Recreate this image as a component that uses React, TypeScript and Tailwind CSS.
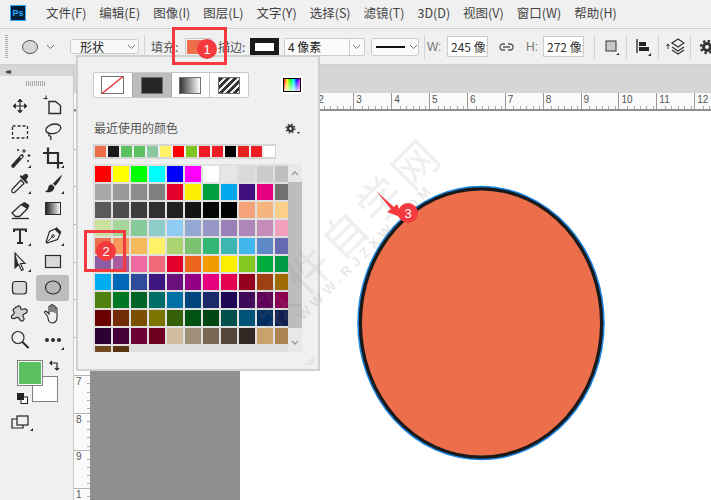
import React from 'react';

const menus = ['文件(F)', '编辑(E)', '图像(I)', '图层(L)', '文字(Y)', '选择(S)', '滤镜(T)', '3D(D)', '视图(V)', '窗口(W)', '帮助(H)'];

const recent = ['#ec6f4a', '#1a1a1a', '#5ac060', '#5ac060', '#8ac99f', '#fff266', '#ff0000', '#7dc61f', '#ee1c25', '#ee1c25', '#000000', '#e5231d', '#ee1c25', '#ffffff'];

const swatches = [
  '#ff0000', '#ffff00', '#00ff00', '#00ffff', '#0000ff', '#ff00ff', '#ffffff', '#e6e6e6', '#d9d9d9', '#cccccc', '#bfbfbf',
  '#a8a8a8', '#999999', '#8c8c8c', '#808080', '#e2002a', '#fcf000', '#009e3d', '#00a7ec', '#3f0f7e', '#e4007f', '#707070',
  '#5a5a5a', '#4c4c4c', '#3d3d3d', '#2f2f2f', '#202020', '#131313', '#050505', '#000000', '#f5a27a', '#f6b47f', '#fbcf8b',
  '#cbe29f', '#a7d69a', '#86c99a', '#8ecdc9', '#8fcbf3', '#93a9d3', '#9896c4', '#9a80b6', '#ae86b8', '#c68cb8', '#f39fbe',
  '#ec7049', '#f59a5a', '#f6b95c', '#fff266', '#acd470', '#7cc271', '#34b675', '#3db6b3', '#40b8ee', '#5f88c6', '#666ab0',
  '#8f5ba3', '#aa5c9f', '#ef6aa0', '#f06a7a', '#e2002a', '#ec661d', '#f39c00', '#fcf000', '#84c71f', '#00ac3b', '#009944',
  '#00aeef', '#0068b7', '#304a9b', '#3e1680', '#690f7e', '#920083', '#e6007e', '#e60050', '#94001e', '#9e4010', '#9f6a00',
  '#4f8010', '#007722', '#006327', '#006d69', '#0071a5', '#00467e', '#1b2a6b', '#200755', '#3f0858', '#610058', '#8c0050',
  '#6b0000', '#722c06', '#7b5000', '#7b7500', '#365f0a', '#005210', '#004713', '#004f48', '#005478', '#002e5f', '#131f50',
  '#2c0034', '#440038', '#6e0038', '#6d0020', '#cfbc9e', '#9f8f78', '#786754', '#544539', '#322824', '#c7a26c', '#a98351',
  '#714a1f', '#5b3412',
];

const ink = '#2b2b2b';

// tool icons, 24 box, corner = small flyout triangle
const Ico = ({ children, corner }: { children?: React.ReactNode; corner?: boolean }) => (
  <svg width="24" height="24" viewBox="0 0 24 24" fill="none" stroke={ink} strokeWidth="1.300">
    {children}
    {corner && <path d="M23 19v3h-3z" fill={ink} stroke="none" />}
  </svg>
);

const tools: React.ReactNode[] = [
  <Ico key="move">
    <path d="M12 6v12M6 12h12" strokeWidth="1.200" />
    <path d="M12 5l2.300 2.500H9.700zM12 19l2.300-2.500H9.700zM5 12l2.500-2.300v4.600zM19 12l-2.500-2.300v4.600z" fill={ink} strokeWidth=".8" />
  </Ico>,
  <Ico key="artboard">
    <path d="M8 7.500h6.500l5 4V19.500H8z" strokeWidth="1.400" />
    <path d="M2.500 4.500h4M5 1.500v4" strokeWidth="1" />
  </Ico>,
  <Ico key="marquee">
    <rect x="4.500" y="6" width="15" height="12" strokeDasharray="3 2" strokeWidth="1.300" />
  </Ico>,
  <Ico key="lasso">
    <path d="M5 11c-1-3.500 4-7 9-7s7 3 5 6-7 4-10 3.500c-2.500-.4-3.500-1-4-2.500z" />
    <path d="M9 13c-1.800 1-1.500 3 0 3s1 3 .5 4" />
  </Ico>,
  <Ico key="wand" corner>
    <path d="M5 20l9-10" strokeWidth="3.600" strokeLinecap="round" />
    <path d="M14 10l-1.500 1.700" stroke="#f0f0f0" strokeWidth="1.500" />
    <path d="M16 3v4M14 5h4M21 8v3M19.500 9.500h3M10 3v2M9 4h2M20 14v2M19 15h2" strokeWidth="1" />
  </Ico>,
  <Ico key="crop" corner>
    <path d="M7 1.500V17h15" strokeWidth="2.200" />
    <path d="M2 7h15v15.500" strokeWidth="2.200" />
  </Ico>,
  <Ico key="dropper" corner>
    <path d="M13 8l-8.500 9c-1 1-1 2-.5 3s2 1 3 0l9-8.500z" strokeWidth="1.200" />
    <path d="M12 5l7 7 1-2-2-2 2-3c1-1.500-1.500-4-3-3l-3 2-2-1z" fill={ink} stroke="none" />
  </Ico>,
  <Ico key="brush" corner>
    <path d="M12 11.500L21 2.500c-.5 3-4 9-7 11.500z" fill={ink} stroke="none" />
    <path d="M11 12.500c-3 0-3.500 2-4 4-.4 1.500-1.500 2.500-3 3 4 2 9 .5 9.500-4.500z" fill={ink} stroke="none" />
  </Ico>,
  <Ico key="eraser">
    <path d="M4 15L13 6.500l6.500 4-8 8H7.500z" />
    <path d="M13 6.500l6.500 4 1.500-1.500c.5-1 .3-1.800-.5-2.500l-3-2c-.8-.5-1.500-.5-2.500.2z" fill={ink} stroke="none" />
    <path d="M4 20.500h17" strokeWidth="1.300" />
  </Ico>,
  <svg key="gradient" width="24" height="24" viewBox="0 0 24 24">
    <defs>
      <linearGradient id="toolGrad">
        <stop offset="0" stopColor="#1f1f1f" />
        <stop offset="1" stopColor="#ffffff" />
      </linearGradient>
    </defs>
    <rect x="4.500" y="4.500" width="15" height="12" fill="url(#toolGrad)" stroke={ink} strokeWidth="1" />
  </svg>,
  <Ico key="type" corner>
    <path d="M6 8V5.500h12V8M12 5.500V18.500M9 19h6" strokeWidth="2" />
  </Ico>,
  <Ico key="pen" corner>
    <path d="M14 5l5 5-2.500 5.500L6 19l-1-1 3.500-10.500z" strokeWidth="1.200" />
    <path d="M14 5l1.500-2 5 5-1.500 2z" fill={ink} stroke="none" />
    <path d="M5.500 18.500l6-6" strokeWidth="1" />
    <circle cx="12" cy="12" r="1.300" strokeWidth="1" />
  </Ico>,
  <Ico key="select" corner>
    <path d="M7 3l10 10.500h-4.500l2.800 6-1.800 1-2.800-6L7 18z" strokeWidth="1.100" />
    <path d="M7 3l3.500 11.500L7 18z" fill={ink} stroke="none" />
  </Ico>,
  <Ico key="rect">
    <rect x="4.500" y="5.500" width="15" height="12" fill="#d9d9d9" strokeWidth="1.200" />
  </Ico>,
  <Ico key="rounded">
    <rect x="4.500" y="5.500" width="14" height="12.500" rx="3" fill="#d9d9d9" strokeWidth="1.200" />
  </Ico>,
  <Ico key="ellipse">
    <ellipse cx="12" cy="11.500" rx="7.500" ry="6.500" fill="#b9b9b9" strokeWidth="1.200" />
  </Ico>,
  <Ico key="custom">
    <path d="M9 5c1.500-2 3.500-1 3.500.8s1.500 1.700 3.500 1.200 4 1 3 3-3.500 1.500-4 3 2 3 .8 5-3.500 1-4.500-1-2.300-2-4.300-.8-4.200-.2-3.500-2 3-2 2.800-3.500-2.300-2.200-.8-3.700 2-.5 2.500-2z" fill="#d0d0d0" strokeWidth="1.200" />
  </Ico>,
  <Ico key="hand">
    <path d="M6.500 14L3.800 11c-1-1.200.6-2.600 1.700-1.500L8 12V5c0-1.400 2-1.400 2 0v5-6.500c0-1.400 2-1.400 2 0V10V4.500c0-1.400 2-1.400 2 0V11V6.500c0-1.400 2-1.400 2 0V15c0 4-2 6-5 6-2.500 0-3.500-1-4.500-7z" strokeWidth="1.100" />
  </Ico>,
  <Ico key="zoom">
    <circle cx="10" cy="9.500" r="6" strokeWidth="1.200" />
    <path d="M14.500 14l6 6" strokeWidth="2" />
  </Ico>,
  <Ico key="more" corner>
    <circle cx="6" cy="12" r="2" fill={ink} stroke="none" />
    <circle cx="12" cy="12" r="2" fill={ink} stroke="none" />
    <circle cx="18" cy="12" r="2" fill={ink} stroke="none" />
  </Ico>,
];

const Chevron = () => (
  <svg width="9" height="6" viewBox="0 0 9 6" fill="none" stroke="#777" strokeWidth="1">
    <path d="M1 1l3.500 3.500L8 1" />
  </svg>
);

const Sep = ({ ml }: { ml: string }) => <div className={`${ml} h-[24px] w-px shrink-0 bg-[#d4d4d4]`} />;

const Badge = ({ n }: { n: string }) => (
  <div className="flex h-[20px] w-[20px] items-center justify-center rounded-full bg-[#f43a3f] text-[13px] leading-none text-white [font-family:'Liberation_Sans',sans-serif]">
    {n}
  </div>
);

const Gear = ({ size }: { size: number }) => (
  <svg width={size} height={size} viewBox="0 0 16 16" fill="none" stroke="#333">
    <circle cx="8" cy="8" r="3.500" strokeWidth="3" />
    <circle cx="8" cy="8" r="6" strokeWidth="2.400" strokeDasharray="2.400 2.300" />
  </svg>
);

function OptionsBar() {
  return (
    <div className="flex h-[36px] items-center border-b border-[#d0d0d0] bg-[#f0f0f0] text-[12px] text-[#444]">
      <div className="ml-[5px] h-[24px] w-[3px] shrink-0 bg-[repeating-linear-gradient(#aaa_0_1px,transparent_1px_2px)]" />
      <svg className="ml-[13px] shrink-0" width="18" height="16" viewBox="0 0 18 16">
        <ellipse cx="9" cy="8" rx="7.500" ry="6.500" fill="#d6d6d6" stroke="#555" strokeWidth="1" />
      </svg>
      <div className="ml-[7px] shrink-0"><Chevron /></div>
      <div className="ml-[15px] flex h-[15px] w-[69px] shrink-0 items-center justify-between rounded-[3px] border border-[#ccc] bg-[#f8f8f8] pl-[9px] pr-[2px] text-[#222]">
        形状 <Chevron />
      </div>
      <Sep ml="ml-[5px]" />
      <span className="ml-[6px] w-[30px] shrink-0 text-[#555]">填充:</span>
      <div className="ml-[4px] flex h-[18px] w-[27px] shrink-0 items-center justify-center border border-[#c8c8c8] bg-[#f4f4f4]">
        <div className="h-[14px] w-[23px] bg-[#ec6e4a]" />
      </div>
      <span className="ml-[6px] w-[28px] shrink-0 whitespace-nowrap text-[#555]">描边:</span>
      <div className="ml-[4px] flex h-[18px] w-[29px] shrink-0 items-center justify-center bg-[#1a1a1a]">
        <div className="h-[8px] w-[19px] bg-white" />
      </div>
      <div className="ml-[5px] flex h-[18px] w-[81px] shrink-0 items-center justify-between rounded-[2px] border border-[#ccc] bg-[#fafafa] pl-[3px] pr-[3px] text-[#222]">
        4 像素
        <div className="flex h-full items-center border-l border-[#ccc] pl-[2px]"><Chevron /></div>
      </div>
      <div className="ml-[6px] flex h-[18px] w-[48px] shrink-0 items-center gap-[4px] rounded-[3px] border border-[#ccc] bg-[#fafafa] pl-[4px]">
        <div className="h-[2px] w-[29px] bg-[#111]" />
        <Chevron />
      </div>
      <Sep ml="ml-[5px]" />
      <span className="ml-[2px] w-[13px] shrink-0 text-[#777] [font-family:'Liberation_Sans',sans-serif]">W:</span>
      <div className="ml-[7px] h-[21px] w-[41px] shrink-0 overflow-hidden whitespace-nowrap border border-[#ccc] bg-white pl-[3px] leading-[19px] text-[#333]">245 像素</div>
      <svg className="ml-[11px] shrink-0" width="15" height="8" viewBox="0 0 15 8" fill="none" stroke="#555" strokeWidth="1.300">
        <path d="M6 1H4a3 3 0 000 6h2M9 1h2a3 3 0 010 6H9M4 4h7" />
      </svg>
      <span className="ml-[12px] w-[11px] shrink-0 text-[#777] [font-family:'Liberation_Sans',sans-serif]">H:</span>
      <div className="ml-[6px] h-[21px] w-[41px] shrink-0 overflow-hidden whitespace-nowrap border border-[#ccc] bg-white pl-[3px] leading-[19px] text-[#333]">272 像素</div>
      <Sep ml="ml-[10px]" />
      <svg className="ml-[10px] shrink-0" width="14" height="16" viewBox="0 0 14 16">
        <rect x="1" y="2" width="10" height="10" fill="#c8c8c8" stroke="#333" strokeWidth="1" />
        <path d="M14 14v2h-3z" fill="#222" />
      </svg>
      <Sep ml="ml-[7px]" />
      <svg className="ml-[9px] shrink-0" width="16" height="18" viewBox="0 0 16 18">
        <path d="M1 1v14" stroke="#222" strokeWidth="1.300" />
        <path d="M3 4h7v4H3zM3 9h10v4H3z" fill="#222" />
        <path d="M15 15v3h-3z" fill="#222" />
      </svg>
      <Sep ml="ml-[6px]" />
      <svg className="ml-[6px] shrink-0" width="20" height="20" viewBox="0 0 20 20" fill="none" stroke="#333">
        <path d="M3 7v5M1.500 9L3 7l1.500 2" strokeWidth="1" />
        <path d="M7 6l6-4 6 4-6 4zM7 10l6 4 6-4M7 13l6 4 6-4" strokeWidth="1.300" />
      </svg>
      <Sep ml="ml-[5px]" />
      <div className="ml-[8px] shrink-0"><Gear size={16} /></div>
    </div>
  );
}

function ToolPanel() {
  return (
    <div className="relative flex h-full w-[74px] shrink-0 flex-col border-r border-[#c9c9c9] bg-[#f0f0f0]">
      <div className="flex h-[11px] items-center bg-[#d6d6d6] pl-[5px] text-[8px] leading-none tracking-[-2px] text-[#444]">◂◂</div>
      <div className="ml-[26px] mt-[5px] h-[5px] w-[19px] bg-[repeating-linear-gradient(90deg,#aaa_0_1px,transparent_1px_2px)]" />
      <div className="mt-[7px] grid grid-cols-[33px_33px] auto-rows-[26px] pl-[3px]">
        {tools.map((t, i) => (
          <div key={i} className={`flex items-center justify-center ${i === 15 ? 'rounded-[3px] bg-[#bdbdbd]' : ''}`}>{t}</div>
        ))}
      </div>
      <div className="relative ml-[17px] mt-[7px] h-[44px] w-[48px]">
        <div className="absolute left-[15px] top-[16px] h-[26px] w-[26px] border border-[#808080] bg-white" />
        <div className="absolute left-0 top-0 h-[26px] w-[26px] border border-[#808080] bg-[#5ac060] shadow-[inset_0_0_0_1px_#fff]" />
        <svg className="absolute left-[32px] top-0" width="12" height="12" viewBox="0 0 12 12" fill="none" stroke="#222" strokeWidth="1.200">
          <path d="M1 3h7v7M3 1L1 3l2 2M6 8l2 2 2-2" />
        </svg>
        <svg className="absolute left-0 top-[33px]" width="11" height="11" viewBox="0 0 11 11">
          <rect x="4" y="4" width="6.500" height="6.500" fill="#fff" stroke="#222" strokeWidth="1" />
          <rect x="0" y="0" width="7" height="7" fill="#222" />
        </svg>
      </div>
      <svg className="ml-[11px] mt-[11px]" width="23" height="16" viewBox="0 0 23 16" fill="none" stroke="#222" strokeWidth="1.200">
        <rect x="6" y="1" width="11" height="9" fill="#f0f0f0" />
        <path d="M6 4H1v9h11v-3" />
        <path d="M22 13v3h-3z" fill="#222" stroke="none" />
      </svg>
    </div>
  );
}

function FillPopup() {
  return (
    <div className="absolute left-[76px] top-[55px] h-[316px] w-[244px] border-2 border-[#d0d0d0] bg-[#f0f0f0]">
      <div className="ml-[15px] mt-[15px] flex items-start">
        <div className="flex h-[26px] w-[156px] overflow-hidden rounded-[2px] border border-[#c8c8c8] bg-white">
          <div className="flex flex-1 items-center justify-center">
            <svg width="23" height="18" viewBox="0 0 23 18">
              <rect x=".5" y=".5" width="22" height="17" fill="#fff" stroke="#707070" />
              <path d="M1 17.500L22 .5" stroke="#ee2a2e" strokeWidth="1.300" />
            </svg>
          </div>
          <div className="flex flex-1 items-center justify-center border-x border-[#a8a8a8] bg-[#bdbdbd]">
            <div className="h-[17px] w-[22px] border border-[#707070] bg-[#262626]" />
          </div>
          <div className="flex flex-1 items-center justify-center border-r border-[#c8c8c8]">
            <div className="h-[17px] w-[22px] border border-[#707070] bg-[linear-gradient(90deg,#333,#fff)]" />
          </div>
          <div className="flex flex-1 items-center justify-center">
            <div className="h-[17px] w-[22px] border border-[#707070] bg-[repeating-linear-gradient(135deg,#333_0_3px,#eee_3px_5px)]" />
          </div>
        </div>
        <div className="ml-[32px] mt-[4px] flex h-[18px] w-[22px] items-center justify-center bg-white">
          <div className="h-[14px] w-[18px] border border-black bg-[linear-gradient(180deg,transparent,#ffffffcc),linear-gradient(90deg,#f00,#ff0,#0f0,#0ff,#00f,#f0f)]" />
        </div>
      </div>
      <div className="ml-[16px] mt-[21px] flex h-[18px] w-[206px] items-center justify-between text-[12px] leading-none text-[#555]">
        最近使用的颜色
        <div className="flex items-end">
          <Gear size={11} />
          <svg className="ml-[1px]" width="3" height="2" viewBox="0 0 3 2"><path d="M0 0h3L1.500 2z" fill="#333" /></svg>
        </div>
      </div>
      <div className="ml-[15px] mt-[7px] flex h-[15px] w-[183px] items-center gap-[2px] border-2 border-[#d6d6d6]">
        {recent.map((c, i) => (
          <div key={i} className="h-[11px] w-[11px] shrink-0" style={{ background: c }} />
        ))}
      </div>
      <div className="ml-[15px] mt-[5px] flex h-[188px] w-[209px] bg-[#e0e0e0]">
        <div className="h-full w-[195px] overflow-hidden pl-[2px] pt-[2px]">
          <div className="grid w-[198px] grid-cols-[repeat(11,16px)] auto-rows-[16px] gap-[2px]">
            {swatches.map((c, i) => (
              <div key={i} style={{ background: c }} />
            ))}
          </div>
        </div>
        <div className="flex w-[14px] flex-col items-center bg-[#e8e8e8]">
          <svg className="mt-[7px]" width="8" height="5" viewBox="0 0 8 5" fill="none" stroke="#999" strokeWidth="1.300"><path d="M1 4l3-3 3 3" /></svg>
          <div className="mt-[6px] h-[146px] w-full bg-[#bdbdbd]" />
          <svg className="mt-[12px]" width="8" height="5" viewBox="0 0 8 5" fill="none" stroke="#999" strokeWidth="1.300"><path d="M1 1l3 3 3-3" /></svg>
        </div>
      </div>
      <svg className="absolute bottom-[3px] right-[3px]" width="11" height="11" viewBox="0 0 11 11" stroke="#bbb" strokeDasharray="1 1">
        <path d="M1 10l9-9M4 10l6-6M7 10l3-3" />
      </svg>
    </div>
  );
}

function Canvas() {
  return (
    <div className="flex min-w-0 flex-1 flex-col">
      <div className="h-[28px] shrink-0 bg-[#d6d6d6]" />
      <div className="flex h-[18px] shrink-0 overflow-hidden border-b-2 border-[#8f8f8f] bg-[#fafafa]">
        <div className="w-[14px] shrink-0" />
        {Array.from({ length: 17 }).map((_, i) => (
          <div key={i} className="relative h-full w-[37.900px] shrink-0 border-l border-[#9a9a9a] pl-[2px] text-[10px] leading-[14px] text-[#555] [font-family:'Liberation_Sans',sans-serif]">
            {i < 4 ? 4 - i : i - 4}
            <div className="absolute bottom-0 left-0 flex w-full justify-around pl-[5px]">
              {[0, 1, 2, 3, 4].map((t) => (
                <div key={t} className="h-[3px] w-px bg-[#aaa]" />
              ))}
            </div>
          </div>
        ))}
      </div>
      <div className="flex min-h-0 flex-1">
        <div className="w-[16px] shrink-0 overflow-hidden bg-[#fafafa]">
          {Array.from({ length: 11 }).map((_, i) => (
            <div key={i} className="relative h-[37.700px] border-t border-[#b5b5b5] pl-[2px] text-[10px] leading-[12px] text-[#555] [font-family:'Liberation_Sans',sans-serif]">
              {i > 9 ? 1 : i}
              <div className="absolute right-0 top-0 flex h-full flex-col justify-around pt-[4px]">
                {[0, 1, 2, 3].map((t) => (
                  <div key={t} className="h-px w-[3px] bg-[#aaa]" />
                ))}
              </div>
            </div>
          ))}
        </div>
        <div className="w-[150px] shrink-0 bg-[#909090]" />
        <div className="relative flex-1 bg-white">
          {/* ellipse shape on the document */}
          <svg className="absolute left-[116px] top-[73px]" width="250" height="278" viewBox="0 0 250 278">
            <ellipse cx="125" cy="139" rx="123" ry="136.500" fill="#1a1a1a" stroke="#1e88e5" strokeWidth="1.500" />
            <ellipse cx="125" cy="139" rx="119" ry="132.500" fill="#ec6e4a" />
          </svg>
        </div>
      </div>
    </div>
  );
}

export default function App() {
  return (
    <div className="relative h-[500px] w-[711px] overflow-hidden bg-[#f0f0f0] [font-family:'Noto_Sans_CJK_SC','Liberation_Sans',sans-serif]">
      {/* menu bar */}
      <div className="flex h-[29px] items-center border-b border-[#d0d0d0] bg-[#f0f0f0] pb-[2px]">
        <div className="ml-[10px] flex h-[16px] w-[16px] items-center justify-center border border-[#31a8ff] bg-[#001e36] text-[9px] font-bold leading-none text-[#31a8ff] [font-family:'Liberation_Sans',sans-serif]">Ps</div>
        <div className="ml-[20px] flex gap-[13px] text-[12.500px] text-[#444]">
          {menus.map((m) => (
            <span key={m} className="whitespace-nowrap">{m}</span>
          ))}
        </div>
      </div>
      <OptionsBar />
      <div className="flex h-[435px]">
        <ToolPanel />
        <Canvas />
      </div>

      <FillPopup />

      {/* watermark */}
      <div className="pointer-events-none absolute left-[200px] top-[207px] w-[300px] origin-center -rotate-45 text-center">
        <div className="whitespace-nowrap text-[44px] leading-[44px] tracking-[6px] text-[#80808026]">软件自学网</div>
        <div className="-mt-px whitespace-nowrap text-[14px] font-bold leading-[16px] tracking-[4.500px] text-[#80808030] [font-family:'Liberation_Sans',sans-serif]">WWW.RJZXW.COM</div>
      </div>

      {/* annotations */}
      <div className="absolute left-[172px] top-[27px] h-[38px] w-[55px] border-[3px] border-[#f43a3f]" />
      <div className="absolute left-[197px] top-[39px]"><Badge n="1" /></div>
      <div className="absolute left-[84px] top-[230px] h-[42px] w-[42px] border-[3px] border-[#f43a3f]" />
      <div className="absolute left-[96px] top-[241px]"><Badge n="2" /></div>
      <svg className="absolute left-[372px] top-[188px]" width="36" height="32" viewBox="0 0 36 32">
        <path d="M4 3l18 16 3-3 6 14-16-6 4-3z" fill="#f43a3f" />
      </svg>
      <div className="absolute left-[398px] top-[203px]"><Badge n="3" /></div>
    </div>
  );
}
